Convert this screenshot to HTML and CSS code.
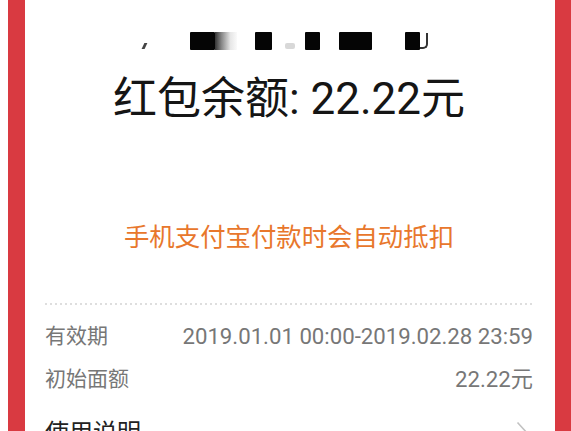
FILE: index.html
```html
<!DOCTYPE html>
<html lang="zh-CN">
<head>
<meta charset="utf-8">
<title>红包详情</title>
<link rel="stylesheet" href="styles.css">
</head>
<body>
<div class="frame">
  <div class="card">
    <div class="redact" aria-hidden="true">
      <span class="mark"></span>
      <span class="blk blk-a"></span>
      <span class="smudge"></span>
      <span class="blk blk-b"></span>
      <span class="faint"></span>
      <span class="blk blk-c"></span>
      <span class="blk blk-d"></span>
      <span class="blk blk-e"></span>
      <span class="hook"></span>
    </div>
    <div class="title">红包余额: 22.22元</div>
    <div class="tip">手机支付宝付款时会自动抵扣</div>
    <div class="dots"></div>
    <div class="row row-first">
      <span class="label">有效期</span>
      <span class="value">2019.01.01 00:00-2019.02.28 23:59</span>
    </div>
    <div class="row row-second">
      <span class="label">初始面额</span>
      <span class="value">22.22元</span>
    </div>
    <div class="usage">
      <span class="usage-text">使用说明</span>
      <svg class="chev" width="14" height="26" viewBox="0 0 14 26"><polyline points="1.5,1.5 12,13 1.5,24.5" fill="none" stroke="#c2c2c2" stroke-width="1.6"/></svg>
    </div>
  </div>
</div>
</body>
</html>
```

FILE: styles.css
```css
html, body {
  margin: 0;
  padding: 0;
  background: #ffffff;
  height: 100%;
  overflow: hidden;
}

.frame {
  margin-left: 8px;
  height: 100%;
  background: #d93a41;
  padding: 0 16px 0 17px;
  box-sizing: border-box;
}

.card {
  background: #ffffff;
  height: 100%;
  box-sizing: border-box;
  padding: 32px 22px 0 20px;
  font-family: Roboto, "Noto Sans CJK SC", sans-serif;
  overflow: hidden;
}

.redact {
  display: flex;
  align-items: flex-end;
  height: 18px;
}

.mark {
  width: 3px;
  height: 6px;
  margin-left: 98px;
  background: #444;
  transform: skewX(-25deg);
  margin-bottom: 1px;
}

.blk {
  height: 18px;
  background: #050505;
  border-radius: 1px;
}

.blk-a { width: 25px; margin-left: 44px; }
.smudge {
  width: 22px;
  height: 18px;
  background: linear-gradient(90deg, #333 0%, #888 30%, #e6e6e6 70%, #fafafa 100%);
}
.blk-b { width: 17px; margin-left: 18px; }
.faint {
  width: 10px;
  height: 6px;
  margin-left: 13px;
  margin-bottom: 1px;
  background: #d8d8d8;
  border-radius: 2px;
}
.blk-c { width: 15px; margin-left: 10px; }
.blk-d { width: 33px; margin-left: 19px; }
.blk-e { width: 15px; margin-left: 33px; }
.hook {
  width: 8px;
  height: 16px;
  margin-bottom: 1px;
  border-right: 2px solid #333;
  border-bottom: 2px solid #333;
  border-bottom-right-radius: 5px;
  box-sizing: border-box;
}

.title {
  margin-top: 23px;
  font-size: 44px;
  line-height: 52px;
  text-align: center;
  color: #151515;
}

.tip {
  margin-top: 96px;
  font-size: 25.4px;
  line-height: 32px;
  text-align: center;
  color: #e8772c;
}

.dots {
  margin-top: 50px;
  height: 2px;
  background-image: repeating-linear-gradient(90deg, #dedede 0, #dedede 2px, transparent 2px, transparent 5px);
}

.row {
  display: flex;
  justify-content: space-between;
  align-items: center;
  color: #777777;
}

.row-first { margin-top: 9px; height: 44px; }
.row-second { height: 42px; }

.label {
  font-size: 21px;
  line-height: 30px;
}

.value {
  font-size: 22.2px;
  line-height: 30px;
}

.usage {
  margin-top: 18px;
  display: flex;
  justify-content: space-between;
  align-items: flex-start;
}

.usage-text {
  font-size: 24px;
  line-height: 30px;
  color: #222;
}

.chev {
  margin-top: 3px;
  margin-right: 3px;
}
```
